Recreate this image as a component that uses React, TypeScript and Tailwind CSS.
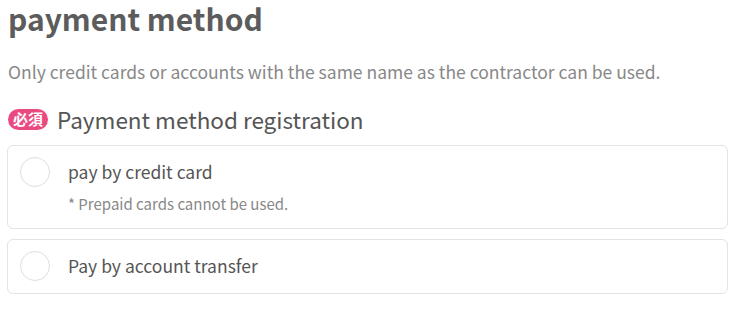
import React from "react";

const font = { fontFamily: '"Noto Sans CJK JP", "Noto Sans", sans-serif' };

// Single radio option card
const Option = ({ label, note }: { label: string; note?: string }) => (
  <label
    className={`flex items-start rounded-[6px] border border-[#e3e3e3] bg-white px-[12px] pt-[11px] ${
      note ? "pb-[14px]" : "pb-[12px]"
    }`}
  >
    <span className="h-[30px] w-[30px] flex-shrink-0 rounded-full border border-[#dedede] bg-white" />
    <span className="ml-[18px] flex flex-col">
      <span className="text-[17.5px] leading-[30px] text-[#555]">{label}</span>
      {note && <span className="mt-[7px] text-[15px] leading-[20px] text-[#888]">{note}</span>}
    </span>
  </label>
);

export default function App() {
  return (
    <div className="w-[735px] h-[313px] bg-white px-[7px] pt-[1px]" style={font}>
      <h1 className="pl-[1px] text-[30px] font-bold leading-[34px] text-[#5c5c5c]">payment method</h1>
      <p className="mt-[24px] pl-[1px] text-[17.5px] leading-[26px] text-[#888]">
        Only credit cards or accounts with the same name as the contractor can be used.
      </p>
      <div className="mt-[19px] flex items-center pl-[1px]">
        <span className="flex h-[21px] w-[40px] items-center justify-center rounded-full bg-[#ea4a82] text-[15px] font-bold text-white">
          必須
        </span>
        <span className="ml-[9px] text-[22.5px] leading-[30px] text-[#555]">Payment method registration</span>
      </div>
      <div className="mt-[11px] flex flex-col gap-[10px]">
        <Option label="pay by credit card" note="* Prepaid cards cannot be used." />
        <Option label="Pay by account transfer" />
      </div>
    </div>
  );
}
